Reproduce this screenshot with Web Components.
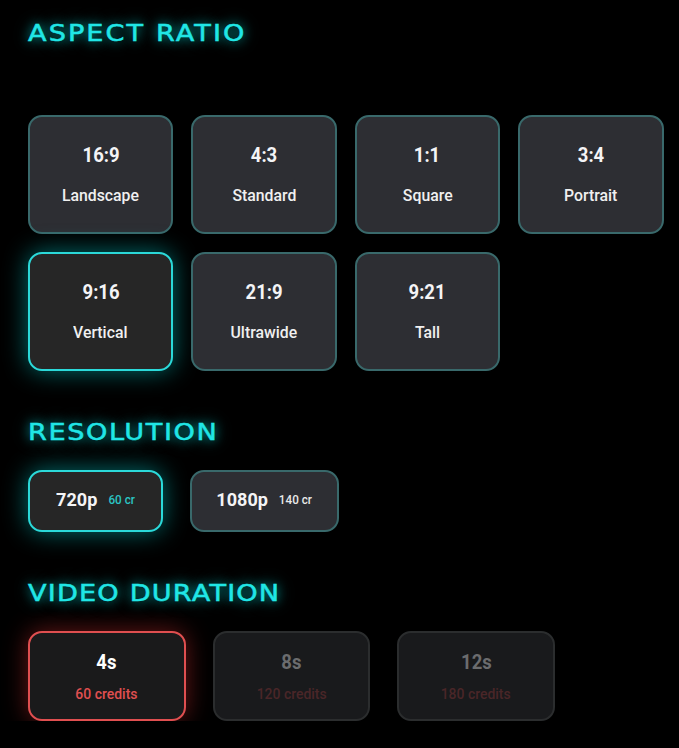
<!DOCTYPE html>
<html>
<head>
<meta charset="utf-8">
<title>Video options</title>
<style>
  html, body { margin: 0; background: #000; }
  body { padding: 20px 15.5px 0 28px; font-family: Roboto, "Liberation Sans", sans-serif; color: #fff; }
</style>
</head>
<body>
<option-section heading="Aspect ratio" gap="69" after="48" tracking="1.75">
  <div style="display:grid;grid-template-columns:repeat(4,1fr);gap:18px">
    <ratio-card value="16:9" label="Landscape"></ratio-card>
    <ratio-card value="4:3" label="Standard"></ratio-card>
    <ratio-card value="1:1" label="Square"></ratio-card>
    <ratio-card value="3:4" label="Portrait"></ratio-card>
    <ratio-card value="9:16" label="Vertical" selected></ratio-card>
    <ratio-card value="21:9" label="Ultrawide"></ratio-card>
    <ratio-card value="9:21" label="Tall"></ratio-card>
  </div>
</option-section>
<option-section heading="Resolution" gap="25" after="48" tracking="1.35">
  <div style="display:flex;gap:27px">
    <res-chip value="720p" cost="60 cr" style="width:135px" selected></res-chip>
    <res-chip value="1080p" cost="140 cr" style="width:149px"></res-chip>
  </div>
</option-section>
<option-section heading="Video duration" gap="25" after="0" tracking="1">
  <div style="display:flex;gap:27px">
    <duration-card value="4s" cost="60 credits" selected></duration-card>
    <duration-card value="8s" cost="120 credits"></duration-card>
    <duration-card value="12s" cost="180 credits"></duration-card>
  </div>
</option-section>

<script>
// shared look of the selectable boxes
const narrow = `
  .v, .l, .c { display: inline-block; white-space: nowrap; }
  .v { transform: scaleX(.88); }
  .l, .c { transform: scaleX(.93); }`;

class OptionSection extends HTMLElement {
  constructor() {
    super();
    let root = this.attachShadow({mode: 'open'});
    root.innerHTML = `
      <style>
        :host { display: block; }
        h2 {
          margin: 0;
          width: max-content;
          font: 400 23px/26px "DejaVu Sans", sans-serif;
          text-transform: uppercase;
          color: #20e6e6;
          -webkit-text-stroke: .5px #20e6e6;
          text-shadow: 0 0 10px rgba(0, 230, 230, .75), 0 0 18px rgba(0, 230, 230, .35);
          transform: scaleX(1.18);
          transform-origin: left center;
          white-space: nowrap;
        }
      </style>
      <h2></h2>
      <slot></slot>`;
    let h = root.querySelector('h2');
    h.textContent = this.getAttribute('heading');
    h.style.marginBottom = this.getAttribute('gap') + 'px';
    h.style.letterSpacing = this.getAttribute('tracking') + 'px';
    this.style.marginBottom = this.getAttribute('after') + 'px';
  }
}
customElements.define('option-section', OptionSection);

class RatioCard extends HTMLElement {
  constructor() {
    super();
    let root = this.attachShadow({mode: 'open'});
    root.innerHTML = `
      <style>
        :host {
          display: flex;
          flex-direction: column;
          align-items: center;
          box-sizing: border-box;
          height: 119px;
          padding-top: 26px;
          background: #2d2e33;
          border: 2px solid #39696b;
          border-radius: 14px;
        }
        :host([selected]) {
          background: #262626;
          border-color: #2bd9d9;
          box-shadow: 0 0 24px rgba(0, 220, 220, .5);
        }
        .v { font: 700 21px/24px Roboto, sans-serif; color: #f4f4f6; }
        .l { font: 500 17px/20px Roboto, sans-serif; color: #f0f0f0; margin-top: 18px; }
        ${narrow}
      </style>
      <div class="v"></div>
      <div class="l"></div>`;
    root.querySelector('.v').textContent = this.getAttribute('value');
    root.querySelector('.l').textContent = this.getAttribute('label');
  }
}
customElements.define('ratio-card', RatioCard);

class ResChip extends HTMLElement {
  constructor() {
    super();
    let root = this.attachShadow({mode: 'open'});
    root.innerHTML = `
      <style>
        :host {
          display: flex;
          align-items: center;
          justify-content: center;
          gap: 8px;
          box-sizing: border-box;
          height: 62px;
          padding-bottom: 2px;
          background: #2d2e33;
          border: 2px solid #39696b;
          border-radius: 14px;
        }
        :host([selected]) {
          background: #262626;
          border-color: #2bd9d9;
          box-shadow: 0 0 24px rgba(0, 220, 220, .5);
        }
        .v { font: 700 19px/24px Roboto, sans-serif; color: #f4f4f6; transform: scaleX(.95); }
        .c { font: 500 13px/24px Roboto, sans-serif; color: #e8e8e8; transform: scaleX(.9); }
        :host([selected]) .c { color: #2bc4c4; }
        .v, .c { display: inline-block; white-space: nowrap; }
      </style>
      <span class="v"></span>
      <span class="c"></span>`;
    root.querySelector('.v').textContent = this.getAttribute('value');
    root.querySelector('.c').textContent = this.getAttribute('cost');
  }
}
customElements.define('res-chip', ResChip);

class DurationCard extends HTMLElement {
  constructor() {
    super();
    let root = this.attachShadow({mode: 'open'});
    root.innerHTML = `
      <style>
        :host {
          display: flex;
          flex-direction: column;
          align-items: center;
          box-sizing: border-box;
          width: 157.67px;
          height: 90px;
          padding-top: 17px;
          background: #191a1c;
          border: 2px solid #2b2d2e;
          border-radius: 14px;
        }
        :host([selected]) {
          background: #1a1a1b;
          border-color: #e04f50;
          box-shadow: 0 0 24px rgba(230, 50, 50, .45);
        }
        .v { font: 700 21px/24px Roboto, sans-serif; color: #6b6c6e; }
        .c { font: 500 15px/20px Roboto, sans-serif; color: #4a2628; margin-top: 10px; }
        :host([selected]) .v { color: #fff; }
        :host([selected]) .c { color: #e04f50; }
        ${narrow}
      </style>
      <div class="v"></div>
      <div class="c"></div>`;
    root.querySelector('.v').textContent = this.getAttribute('value');
    root.querySelector('.c').textContent = this.getAttribute('cost');
  }
}
customElements.define('duration-card', DurationCard);
</script>
</body>
</html>
